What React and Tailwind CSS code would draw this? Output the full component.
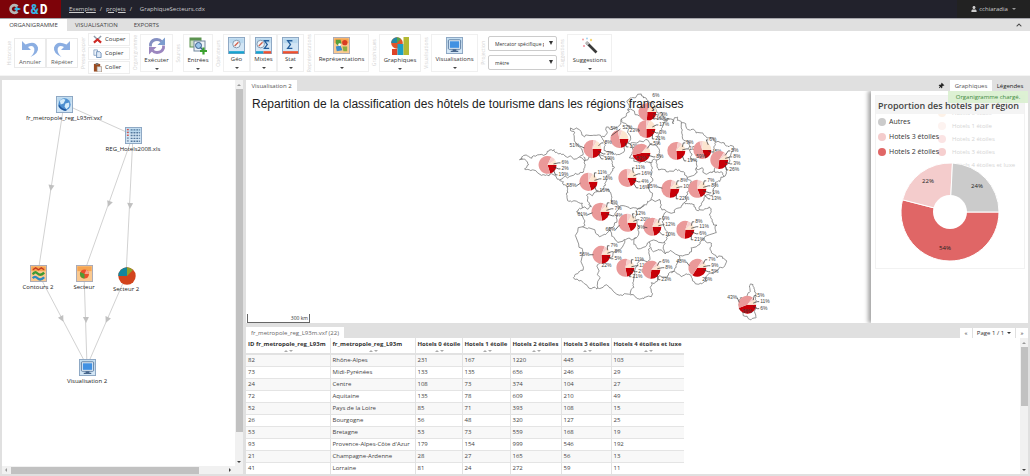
import React from "react";
import { FaUser, FaThumbtack, FaChevronUp } from "react-icons/fa";

const rows = [
  [82, "Rhône-Alpes", 231, 167, 1220, 445, 103],
  [73, "Midi-Pyrénées", 133, 135, 656, 246, 29],
  [24, "Centre", 108, 73, 374, 104, 27],
  [72, "Aquitaine", 135, 78, 609, 210, 49],
  [52, "Pays de la Loire", 85, 71, 393, 108, 15],
  [26, "Bourgogne", 56, 48, 320, 127, 25],
  [53, "Bretagne", 53, 73, 559, 168, 19],
  [93, "Provence-Alpes-Côte d'Azur", 179, 154, 999, 546, 192],
  [21, "Champagne-Ardenne", 28, 27, 165, 56, 13],
  [41, "Lorraine", 81, 24, 272, 59, 11],
];

const columns = [
  { name: "ID fr_metropole_reg_L93m", width: "w-[84px]" },
  { name: "fr_metropole_reg_L93m", width: "w-[85px]" },
  { name: "Hotels 0 étoile", width: "w-[47px]" },
  { name: "Hotels 1 étoile", width: "w-[48px]" },
  { name: "Hotels 2 étoiles", width: "w-[51px]" },
  { name: "Hotels 3 étoiles", width: "w-[50px]" },
  { name: "Hotels 4 étoiles et luxe", width: "w-[73px]" },
];

// region outlines, as lists of x,y pairs in map units
const outlines = [
  "642,94 644,98 650,103 657,111 663,113 670,119 674,124 678,117 682,123 690,130 702,133 708,138 717,142 725,143 733,146 732,153 727,165 724,177 718,182 716,187 707,195 702,205 700,210 710,207 712,209 713,220 717,233 705,238 712,245 715,255 726,260 723,268 714,274 707,282 702,284 693,279 682,277 670,273 660,276 652,283 652,297 642,299 632,295 625,294 610,288 597,289 585,284 574,278 580,272 583,250 583,227 582,215 577,212 583,208 572,202 567,195 564,185 560,180 547,175 533,170 525,169 529,165 520,160 528,156 538,155 550,150 558,153 567,157 580,157 578,145 571,128 580,130 585,137 602,137 607,127 622,119 630,112 628,103 631,98 642,94",
  "628,110 640,116 655,118 670,119",
  "622,119 628,125 630,135 628,143",
  "602,137 606,143 607,152 617,155 625,151 628,143",
  "580,157 592,158 604,156 612,160 615,168",
  "628,143 640,141 655,145 660,152 657,160 648,162 640,163 630,158 628,143",
  "657,145 662,130 670,119",
  "682,123 683,137 690,150 692,160 697,168",
  "657,160 658,168 668,172 680,170 688,178 697,168 708,174 718,172 724,177",
  "717,142 714,150 718,160 716,172",
  "584,157 585,168 580,174 568,178 560,180",
  "615,168 608,175 606,185 600,192 590,194 588,200 592,207 583,208",
  "606,190 612,200 620,207",
  "650,162 652,170 650,185 652,200 645,205 635,208 620,207",
  "688,178 692,185 688,195 685,203",
  "652,200 662,205 668,212 680,208 685,203 695,205 700,210",
  "620,207 617,218 610,228 600,237 583,227",
  "645,205 638,215 640,228 637,238",
  "610,228 615,238 625,240 637,238",
  "667,212 663,222 668,232 665,242 650,242 637,247 637,238",
  "665,242 666,254 680,256 690,254 700,245 705,238",
  "680,256 676,268 672,273",
  "650,242 654,252 666,254",
  "651,248 648,262 635,272 634,285 632,295",
  "625,240 620,250 610,258 600,264 598,275 597,289",
  "752,284 755,288 757,297 757,308 752,320 744,316 740,305 741,298 750,293 752,284",
];

// shares go clockwise from three o'clock: 2 stars, 3 stars, 1 star, 0 star
const pies = [
  { x: 648, y: 112, s: [26, 52, 6, 16], l: [["6%", 5, -16], ["9%", 13, 3], ["16%", 9, 7]] },
  { x: 647, y: 129, s: [25, 50, 6, 19], l: [["17%", 13, -4], ["23%", -17, 2], ["3%", 13, 4], ["21%", 9, 10]] },
  { x: 620, y: 139, s: [22, 50, 8, 20], l: [["5%", -9, -10], ["52%", 3, -11], ["10%", 10, 8]] },
  { x: 593, y: 149, s: [24, 53, 6, 17], l: [["51%", -23, -3], ["8%", 12, -6], ["3%", 14, 5], ["19%", 12, 10]] },
  { x: 642, y: 153, s: [46, 40, 4, 10], l: [["5%", 12, -9], ["8%", 15, 4], ["52%", -5, 6]] },
  { x: 677, y: 151, s: [24, 54, 8, 14], l: [["9%", 10, -8], ["10%", 13, -2], ["19%", 11, 10]] },
  { x: 703, y: 150, s: [20, 50, 6, 24], l: [["6%", 7, -10], ["59%", -6, 7], ["8%", 12, 2]] },
  { x: 720, y: 160, s: [27, 57, 6, 10], l: [["5%", 12, -9], ["8%", 14, -3], ["3%", 14, 4], ["26%", 10, 10]] },
  { x: 548, y: 165, s: [20, 62, 9, 9], l: [["6%", 14, -2], ["2%", 14, 4], ["19%", 11, 10]] },
  { x: 589, y: 182, s: [20, 55, 8, 17], l: [["11%", 9, -9], ["10%", 14, -3], ["58%", -22, 4], ["16%", 11, 9]] },
  { x: 628, y: 178, s: [19, 55, 9, 17], l: [["11%", 8, -10], ["16%", 14, -4], ["4%", 14, 4], ["16%", 12, 10]] },
  { x: 671, y: 189, s: [26, 52, 8, 14], l: [["8%", 10, -8], ["10%", 13, -2], ["55%", -23, -2], ["22%", 9, 10]] },
  { x: 698, y: 189, s: [19, 57, 8, 16], l: [["7%", 10, -8], ["8%", 14, -3], ["1%", 15, 4], ["13%", 14, 10]] },
  { x: 601, y: 212, s: [22, 58, 7, 13], l: [["8%", 10, -9], ["7%", 14, -3], ["61%", -23, 3], ["4%", 15, 4]] },
  { x: 628, y: 223, s: [19, 56, 8, 17], l: [["12%", 8, -9], ["20%", 13, -3], ["60%", -22, 7]] },
  { x: 653, y: 227, s: [22, 58, 6, 14], l: [["9%", 10, -8], ["12%", 13, -2], ["8%", -15, 1], ["10%", 13, 8]] },
  { x: 686, y: 230, s: [26, 54, 8, 12], l: [["8%", 10, -8], ["11%", 14, -3], ["6%", 14, 4], ["21%", 9, 10]] },
  { x: 602, y: 255, s: [24, 57, 7, 12], l: [["7%", 9, -9], ["8%", 13, -3], ["56%", -22, 0], ["5%", 13, 4], ["22%", 0, 11]] },
  { x: 626, y: 268, s: [22, 56, 10, 12], l: [["11%", 9, -8], ["11%", 14, -2], ["2%", 13, 4], ["21%", 7, 9]] },
  { x: 652, y: 270, s: [27, 58, 6, 9], l: [["6%", 11, -8], ["8%", 14, -2], ["23%", 10, 10]] },
  { x: 698, y: 268, s: [34, 50, 6, 10], l: [["7%", 11, -8], ["9%", 14, -2], ["48%", -21, -6], ["5%", 14, 4], ["26%", 5, 12]] },
  { x: 748, y: 305, s: [44, 42, 4, 10], l: [["5%", 10, -9], ["11%", 13, -3], ["43%", -20, -7], ["6%", 13, 4], ["36%", -5, 7]] },
];

const pieColors = ["#c80008", "#ea9999", "#f6cfcd", "#fce5cf"];

// midpoint displacement, gives the borders their ragged line
const rough = (line, seed) => {
  let state = seed * 7919 + 13;
  const next = () => {
    state = (state * 16807) % 2147483647;
    return state / 2147483647 - 0.5;
  };
  let pts = line.split(" ").map((p) => p.split(",").map(Number));
  for (let pass = 0; pass < 3; pass++) {
    const out = [pts[0]];
    for (let i = 1; i < pts.length; i++) {
      const [ax, ay] = pts[i - 1];
      const [bx, by] = pts[i];
      const d = Math.hypot(bx - ax, by - ay) * 0.6;
      out.push([(ax + bx) / 2 + next() * d, (ay + by) / 2 + next() * d], [bx, by]);
    }
    pts = out;
  }
  return pts.map((p) => p.map((n) => n.toFixed(1)).join(",")).join(" ");
};

const slice = (cx, cy, r, from, to) => {
  const a = from * 2 * Math.PI;
  const b = to * 2 * Math.PI;
  return `M${cx},${cy} L${cx + r * Math.cos(a)},${cy + r * Math.sin(a)} A${r},${r} 0 ${to - from > 0.5 ? 1 : 0} 1 ${cx + r * Math.cos(b)},${cy + r * Math.sin(b)} Z`;
};

/* ---------- icons ---------- */

const Tile = ({ warm, children, ...props }) => (
  <svg viewBox="0 0 18 18" width="17" height="17" {...props}>
    <rect x="0.5" y="0.5" width="17" height="17" fill={warm ? "#fbc98f" : "#d3e6f5"} stroke={warm ? "#a9a9b5" : "#8aa5c2"} />
    <rect x="1.5" y="1.5" width="15" height="5" fill={warm ? "#f6a552" : "#b9d8ee"} />
    {children}
  </svg>
);

const GlobeIcon = (props) => (
  <Tile {...props}>
    <circle cx="9" cy="9" r="6.5" fill="#4d8fd0" />
    <path d="M4 5 Q7 2 10 4 L8 8 L5 9 Z M10 8 L14 7 L14 11 L11 14 L9 11 Z" fill="#d5ecfa" />
    <path d="M3 10 Q6 15 11 15" stroke="#1f5499" strokeWidth="1.5" fill="none" />
  </Tile>
);

const SheetIcon = (props) => (
  <Tile {...props}>
    {[3, 6, 9, 12, 15].map((y, i) => (
      <g key={y}>
        <rect x="2" y={y - 1} width="2" height="1.5" fill={i < 3 ? "#d4574e" : "#7f93ac"} />
        <path d={`M6 ${y} H16`} stroke="#56789c" strokeWidth="1.5" strokeDasharray="2 1" />
      </g>
    ))}
  </Tile>
);

const ContourIcon = (props) => (
  <Tile warm {...props}>
    <path d="M3 5 L6 3 L9 5 L12 3 L15 5" stroke="#c63a1e" strokeWidth="1.5" fill="none" />
    <path d="M3 10 Q5 6 8 9 T15 8" stroke="#3f9a33" strokeWidth="2.5" fill="none" />
    <path d="M3 14 Q5 11 8 14 T15 13" stroke="#2c8ac4" strokeWidth="2.5" fill="none" />
  </Tile>
);

const SectorIcon = (props) => (
  <Tile warm {...props}>
    <circle cx="9" cy="9.5" r="4.8" fill="#e9502d" />
    <path d="M9 9.5 L4.5 7.5 A4.8 4.8 0 0 0 9 14.3 Z" fill="#4f9c36" />
    <path d="M9 9.5 L11 5 A4.8 4.8 0 0 1 13.8 9.5 Z" fill="#f7a28c" />
  </Tile>
);

const ScreenIcon = (props) => (
  <Tile {...props}>
    <rect x="2.5" y="3" width="13" height="10" rx="1" fill="#edf5fb" stroke="#56779d" />
    <rect x="4" y="4.5" width="10" height="7" fill="#4191e2" />
    <path d="M7 13 H11 V14.5 H13 V16 H5 V14.5 H7 Z" fill="#48678c" />
  </Tile>
);

const PieIcon = (props) => (
  <svg viewBox="0 0 18 18" width="18" height="18" {...props}>
    <circle cx="9" cy="9" r="8.7" fill="#d2431c" />
    <path d="M9 9 L0.3 9 A8.7 8.7 0 0 1 9 0.3 Z" fill="#12869e" />
    <path d="M9 9 L9 0.3 A8.7 8.7 0 0 1 15 3 Z" fill="#8fa02c" />
  </svg>
);

const UndoIcon = ({ flip }) => (
  <svg viewBox="0 0 18 18" className={flip ? "size-[18px] -scale-x-100" : "size-[18px]"}>
    <path d="M1 1 V10 H10 L7 7 Q12 4.500 13.300 8.500 Q14 13 9.500 17 Q18 13 17 7.500 Q14.500 0 4.500 4.500 Z" fill="#6f9bdc" />
  </svg>
);

const CutIcon = () => (
  <svg viewBox="0 0 10 10" className="size-[9px]">
    <path d="M1 1 L7 7 M9 1 L3 7" stroke="#8d9aa8" strokeWidth="1.600" />
    <path d="M1 8.500 L5 5 L9 8.500" stroke="#cf2a25" strokeWidth="2.400" fill="none" />
  </svg>
);

const CopyIcon = () => (
  <svg viewBox="0 0 10 10" className="size-[9px]">
    <path d="M1 1 H5 V7 H1 Z" fill="#eef3fa" stroke="#8ca5c5" />
    <path d="M4 3 H7.500 L9 4.500 V9.500 H4 Z" fill="#dfeaf7" stroke="#6e8fb8" />
  </svg>
);

const PasteIcon = () => (
  <svg viewBox="0 0 10 10" className="size-[9px]">
    <path d="M1 1 H8 V9.500 H1 Z" fill="#9a4a1f" />
    <path d="M3 0 H6 V2 H3 Z" fill="#7a7a7a" />
    <path d="M4.500 4 H9.500 V10 H4.500 Z" fill="#e6e9ee" stroke="#a3826a" strokeWidth="0.700" />
  </svg>
);

const RefreshIcon = () => (
  <svg viewBox="0 0 18 18" className="size-[18px]">
    <path d="M2.500 9.500 V7 Q4 2.500 9 2.500 Q12 2.500 13.500 4.500" stroke="#8590c2" strokeWidth="2.800" fill="none" />
    <path d="M17 0.500 V8 H9.500 Z" fill="#7c9cce" />
    <path d="M15.500 8.500 V11 Q14 15.500 9 15.500 Q6 15.500 4.500 13.500" stroke="#9b86bf" strokeWidth="2.800" fill="none" />
    <path d="M1 17.500 V10 H8.500 Z" fill="#9b86bf" />
  </svg>
);

const SourcesIcon = () => (
  <svg viewBox="0 0 18 18" className="size-[18px]">
    <rect x="1" y="1" width="11" height="9" fill="#cfe2c4" stroke="#5c9350" />
    <rect x="1" y="1" width="11" height="2.500" fill="#5c9350" />
    <rect x="5" y="4" width="11" height="10" fill="#eef3f8" stroke="#72879d" />
    <circle cx="9.500" cy="8.500" r="3" fill="#9ac4ea" stroke="#375d88" />
    <path d="M11.500 10.500 L14 13" stroke="#375d88" strokeWidth="1.500" />
    <path d="M14.500 10.500 V17.500 M11 14 H18" stroke="#3ba12f" strokeWidth="2.200" />
  </svg>
);

const Compass = ({ cx = 9 }) => (
  <g>
    <circle cx={cx} cy="7.500" r="4" fill="#eef4f9" stroke="#7d95ad" />
    <path d={`M${cx - 2} 9.500 L${cx + 2} 5.500`} stroke="#d25f4a" strokeWidth="1.300" />
  </g>
);

const GeoIcon = () => (
  <Tile>
    <Compass />
    <rect x="1" y="15" width="16" height="2.500" fill="#16a3cf" />
  </Tile>
);

const Sigma = ({ x }) => (
  <path d={`M${x + 5} 4 H${x} L${x + 3} 8 L${x} 12 H${x + 5}`} fill="none" stroke="#245e9c" strokeWidth="1.400" />
);

const MixIcon = () => (
  <Tile>
    <Compass cx={6} />
    <Sigma x={10} />
    <rect x="1" y="15" width="8" height="2.500" fill="#16a3cf" />
    <rect x="9" y="15" width="8" height="2.500" fill="#f0502d" />
  </Tile>
);

const StatIcon = () => (
  <Tile>
    <Sigma x={6} />
    <rect x="1" y="15" width="16" height="2.500" fill="#f0502d" />
  </Tile>
);

const RepresentationIcon = () => (
  <Tile warm>
    <path d="M3 3 H8 L9 7 L5 9 L3 7 Z" fill="#56a03b" />
    <path d="M3 10 L8 9 L10 14 L4 15 Z" fill="#3d8cc9" />
    <circle cx="12.500" cy="6" r="2.800" fill="#d83c22" />
    <path d="M10 10 H15 V15 H11 Z" fill="#8cae3f" />
    <circle cx="7" cy="8" r="1.400" fill="#fff" />
  </Tile>
);

const ChartsIcon = () => (
  <svg viewBox="0 0 18 18" className="size-[18px]">
    <circle cx="6" cy="6" r="5.800" fill="#e0552b" />
    <path d="M6 6 L0.200 6 A5.800 5.800 0 0 1 6 0.200 Z" fill="#2389a5" />
    <path d="M6 6 L6 0.200 A5.800 5.800 0 0 1 10 2 Z" fill="#57a548" />
    <rect x="1" y="12" width="5.500" height="6" fill="#dd4326" />
    <rect x="6.500" y="7" width="6" height="11" fill="#1d9fc6" />
    <rect x="12.500" y="0" width="5.500" height="18" fill="#b3b932" />
  </svg>
);

const WandIcon = () => (
  <svg viewBox="0 0 18 18" className="size-[18px]">
    <path d="M5.500 5.500 L15.500 15.500" stroke="#3a3a3a" strokeWidth="2.600" />
    <path d="M5 5 L7.500 7.500" stroke="#b9b9b9" strokeWidth="2.600" />
    <g>
      <circle cx="2" cy="2.500" r="1" fill="#f2a0a0" />
      <circle cx="6" cy="1.500" r="1" fill="#a6d3ef" />
      <circle cx="10" cy="3" r="1.200" fill="#f4d77a" />
      <circle cx="3" cy="9" r="1" fill="#f08b9a" />
    </g>
  </svg>
);

/* ---------- toolbar ---------- */

const GroupLabel = ({ children }) => (
  <span className="flex w-[10px] shrink-0 items-center justify-center">
    <span className="rotate-180 whitespace-nowrap text-[5px] leading-[8px] text-[#d4d4d4] [writing-mode:vertical-rl]">
      {children}
    </span>
  </span>
);

const ToolButton = ({ icon, label, width }) => (
  <button className={`flex h-[38px] flex-col items-center border border-[#f0f0f0] pt-0.5 ${width}`}>
    {icon}
    <span className="mt-px text-[6px] leading-[8px]">{label}</span>
    <span className="mt-1 border-x-2 border-t-2 border-x-transparent border-t-[#444]" />
  </button>
);

const clipboard = [
  { icon: <CutIcon />, label: "Couper" },
  { icon: <CopyIcon />, label: "Copier" },
  { icon: <PasteIcon />, label: "Coller" },
];

const Dropdown = ({ label, value }) => (
  <div className="relative flex h-[15px] w-[69px]">
    <select aria-label={label} className="block h-full w-full appearance-none overflow-hidden rounded-xs border border-[#ccc] bg-white pl-1.5 pr-3 text-[5px] leading-[12px] text-clip">
      <option>{value}</option>
    </select>
    <span className="pointer-events-none absolute right-1 top-[5px] border-x-2 border-t-4 border-x-transparent border-t-[#333]" />
  </div>
);

const Toolbar = () => (
  <div className="flex h-[45px] items-center border-b border-[#f4f4f4] bg-white pl-1 text-[#333]">
    <GroupLabel>Historique</GroupLabel>
    <div className="flex">
      <button className="flex h-[30px] w-8 flex-col items-center border border-[#e6e6e6] pt-px opacity-80">
        <UndoIcon />
        <span className="text-[6px] leading-[8px]">Annuler</span>
      </button>
      <button className="flex h-[30px] w-8 flex-col items-center border border-[#e6e6e6] pt-px opacity-80">
        <UndoIcon flip />
        <span className="text-[6px] leading-[8px]">Répéter</span>
      </button>
    </div>
    <GroupLabel>Presse-papier</GroupLabel>
    <div className="flex flex-col gap-px">
      {clipboard.map((item) => (
        <button key={item.label} className="flex h-[13px] w-[42px] items-center gap-[3px] border border-[#eee] pl-1 text-[6px] leading-[8px]">
          {item.icon}
          {item.label}
        </button>
      ))}
    </div>
    <GroupLabel>Organigramme</GroupLabel>
    <ToolButton icon={<RefreshIcon />} label="Exécuter" width="w-[33px]" />
    <GroupLabel>Sources</GroupLabel>
    <ToolButton icon={<SourcesIcon />} label="Entrées" width="w-[30px]" />
    <GroupLabel>Opérateurs</GroupLabel>
    <ToolButton icon={<GeoIcon />} label="Géo" width="w-[27px]" />
    <ToolButton icon={<MixIcon />} label="Mixtes" width="w-[27px]" />
    <ToolButton icon={<StatIcon />} label="Stat" width="w-[27px]" />
    <GroupLabel>Représentations</GroupLabel>
    <ToolButton icon={<RepresentationIcon />} label="Représentations" width="w-[55px]" />
    <GroupLabel>Graphiques</GroupLabel>
    <ToolButton icon={<ChartsIcon />} label="Graphiques" width="w-[42px]" />
    <GroupLabel>Visualisations</GroupLabel>
    <ToolButton icon={<ScreenIcon />} label="Visualisations" width="w-[47px]" />
    <GroupLabel>Projection</GroupLabel>
    <div className="flex flex-col gap-1">
      <Dropdown label="Projection" value="Mercator spécifique p" />
      <Dropdown label="Unité" value="mètre" />
    </div>
    <GroupLabel>Suggestions</GroupLabel>
    <ToolButton icon={<WandIcon />} label="Suggestions" width="w-[45px]" />
  </div>
);

/* ---------- left panel ---------- */

const links = [
  [64, 104, 38, 273, 51, 188],
  [64, 104, 133, 135],
  [133, 135, 84, 273, 109, 204],
  [133, 135, 126, 276, 130, 206],
  [38, 273, 87, 366, 62, 319],
  [84, 273, 87, 366, 86, 320],
  [126, 276, 87, 366, 107, 320],
];

const nodes = [
  { x: 64, y: 104, Icon: GlobeIcon, label: "fr_metropole_reg_L93m.vxf" },
  { x: 133, y: 135, Icon: SheetIcon, label: "REG_Hotels2008.xls" },
  { x: 38, y: 273, Icon: ContourIcon, label: "Contours 2" },
  { x: 84, y: 273, Icon: SectorIcon, label: "Secteur" },
  { x: 126, y: 275, Icon: PieIcon, label: "Secteur 2" },
  { x: 87, y: 367, Icon: ScreenIcon, label: "Visualisation 2" },
];

const VerticalBar = ({ thumb }) => (
  <div aria-hidden="true" className="flex w-2 shrink-0 flex-col items-center bg-[#f1f1f1]">
    <span className="flex h-[9px] items-center">
      <span className="border-x-2 border-b-2 border-x-transparent border-b-[#999]" />
    </span>
    <span className={`w-[7px] bg-[#c1c1c1] ${thumb}`} />
    <span className="mt-auto flex h-[9px] items-center">
      <span className="border-x-2 border-t-2 border-x-transparent border-t-[#444]" />
    </span>
  </div>
);

const FlowPanel = () => (
  <section className="flex w-[241px] shrink-0 flex-col bg-white">
    <div className="flex min-h-0 flex-1">
      <svg viewBox="2 80 232 386" preserveAspectRatio="xMinYMin meet" className="min-w-0 flex-1">
        {links.map(([x1, y1, x2, y2, ax, ay], i) => (
          <g key={i}>
            <line x1={x1} y1={y1} x2={x2} y2={y2} stroke="#d2d2d2" />
            {ax && (
              <path
                d="M-3,-3 H3 L0,3 Z"
                fill="#c0c0c0"
                transform={`translate(${ax} ${ay}) rotate(${(Math.atan2(y2 - y1, x2 - x1) * 180) / Math.PI - 90})`}
              />
            )}
          </g>
        ))}
        {nodes.map(({ x, y, Icon, label }) => (
          <g key={label}>
            <Icon x={x - 8} y={y - 8} />
            <text x={x} y={y + 16} textAnchor="middle" fontSize="6" fill="#222">
              {label}
            </text>
          </g>
        ))}
      </svg>
      <VerticalBar thumb="h-[343px]" />
    </div>
    <div aria-hidden="true" className="flex h-2 items-center bg-[#f1f1f1] pl-[3px] pr-3">
      <span className="border-y-2 border-r-2 border-y-transparent border-r-[#999]" />
      <span className="ml-1 h-[7px] w-[188px] bg-[#c1c1c1]" />
      <span className="ml-auto border-y-2 border-l-2 border-y-transparent border-l-[#444]" />
    </div>
  </section>
);

/* ---------- map ---------- */

const MapView = () => (
  <div className="relative min-w-0 flex-1 bg-white">
    <svg viewBox="246 91 626 232" preserveAspectRatio="xMinYMin meet" className="h-full w-full">
      {outlines.map((line, i) => (
        <polyline key={i} points={rough(line, i + 1)} fill="none" stroke="#666" strokeWidth="0.700" />
      ))}
      {pies.map((pie) => {
        let start = 0;
        return (
          <g key={`${pie.x}-${pie.y}`}>
            {pie.s.map((share, i) => {
              const from = start;
              start += share / 100;
              return <path key={i} d={slice(pie.x, pie.y, 9, from, start)} fill={pieColors[i]} />;
            })}
            {pie.l.map(([text, dx, dy]) => (
              <g key={`${text}${dy}`}>
                {Math.abs(dx) > 6 && (
                  <path
                    d={dx > 0 ? `M${pie.x + 6},${pie.y + dy / 2} L${pie.x + dx - 3},${pie.y + dy} h2` : `M${pie.x - 8},${pie.y + dy / 3} L${pie.x + dx + 10},${pie.y + dy}`}
                    fill="none"
                    stroke="#333"
                    strokeWidth="0.700"
                  />
                )}
                <text x={pie.x + dx} y={pie.y + dy + 1} fontSize="5" fill="#444" fontFamily="Liberation Sans, sans-serif">
                  {text}
                </text>
              </g>
            ))}
          </g>
        );
      })}
    </svg>
    <h2 className="absolute left-1.5 top-1.5 whitespace-nowrap font-['Liberation_Sans',sans-serif] text-[12px] leading-[14px] text-[#222]">
      Répartition de la classification des hôtels de tourisme dans les régions françaises
    </h2>
    <span className="absolute bottom-0 left-px h-[9px] w-[63px] border-x border-b border-[#666] pr-px text-right text-[5px] leading-[9px]">
      300 km
    </span>
  </div>
);

/* ---------- charts panel ---------- */

const legend = [
  { label: "Autres", color: "bg-[#cbcbcb]" },
  { label: "Hotels 3 étoiles", color: "bg-[#f4cccc]" },
  { label: "Hotels 2 étoiles", color: "bg-[#e06666]" },
];

const fading = [
  { label: "Hotels 0 étoile", color: "bg-[#fdf2e8]" },
  { label: "Hotels 1 étoile", color: "bg-[#fdf3f0]" },
  { label: "Hotels 2 étoiles", color: "bg-[#fbe4e4]" },
  { label: "Hotels 3 étoiles", color: "bg-[#f6cfcf]" },
  { label: "Hotels 4 étoiles et luxe", color: "bg-white" },
];

const donut = [
  { from: 0, to: 0.54, color: "#e06666", text: "54%", x: 45, y: 89 },
  { from: 0.54, to: 0.758, color: "#f4cccc", text: "22%", x: 28, y: 22 },
  { from: 0.758, to: 1, color: "#cbcbcb", text: "24%", x: 77, y: 27 },
];

const ChartsPanel = () => (
  <aside className="relative w-[157px] shrink-0 bg-white pl-1 pr-[3px] pt-1 shadow-[-3px_0_4px_rgba(0,0,0,0.35)]">
    <div className="relative border border-[#f2f2f2] pb-1.5">
      <h3 className="relative z-10 h-[18px] whitespace-nowrap bg-[#f4f4f4] pl-0.5 text-[9px] font-semibold leading-[20px] text-[#444]">
        Proportion des hotels par région
      </h3>
      <ul className="absolute left-[62px] top-[13px] flex flex-col gap-[5px] text-[6px] leading-[8px] text-[#d4d4d4]">
        {fading.map((item) => (
          <li key={item.label} className="flex items-center gap-1.5 whitespace-nowrap">
            <span className={`size-2 rounded-full ${item.color}`} />
            {item.label}
          </li>
        ))}
      </ul>
      <ul className="relative flex flex-col gap-[5px] px-0.5 pt-[3px] text-[7px] leading-[10px] text-[#333]">
        {legend.map((item) => (
          <li key={item.label} className="flex items-center gap-[3px]">
            <span className={`size-2 rounded-full ${item.color}`} />
            {item.label}
          </li>
        ))}
      </ul>
      <svg viewBox="0 0 100 100" className="relative mx-auto mt-[5px] size-[100px]">
        {donut.map((d) => (
          <g key={d.text}>
            <path d={slice(50, 50, 49, d.from, d.to)} fill={d.color} stroke="#fff" />
            <text x={d.x} y={d.y - 1} textAnchor="middle" fontSize="6" fill="#222">
              {d.text}
            </text>
          </g>
        ))}
        <circle cx="50" cy="50" r="17" fill="#fff" />
      </svg>
    </div>
    <div role="status" className="absolute right-0 top-0 z-20 h-3 w-20 bg-[#d9efcf]/90 text-center text-[6px] leading-[12px] text-[#3c8a3d]">
      Organigramme chargé.
    </div>
  </aside>
);

/* ---------- data table ---------- */

const DataPanel = () => (
  <section className="flex h-[151px] flex-col">
    <div className="flex h-[15px] shrink-0 items-end justify-between">
      <h2 className="h-[11px] bg-white px-[5px] text-[6px] leading-[12px] text-[#666]">fr_metropole_reg_L93m.vxf (22)</h2>
      <nav className="flex gap-px text-[6px] leading-[10px] text-[#333]">
        <button className="h-[10px] w-3 bg-white">«</button>
        <button className="flex h-[10px] w-[42px] items-center justify-center gap-[3px] bg-white">
          Page 1 / 1
          <span className="border-x-2 border-t-2 border-x-transparent border-t-[#333]" />
        </button>
        <button className="h-[10px] w-3 bg-white">»</button>
      </nav>
    </div>
    <div className="flex min-h-0 flex-1 bg-white">
      <div className="min-w-0 flex-1 overflow-hidden">
        <table className="w-[438px] table-fixed border-collapse text-[6px] leading-[8px] text-[#444]">
          <thead>
            <tr className="h-4 border-b-2 border-[#e2e2e2]">
              {columns.map((col) => (
                <th key={col.name} className={`${col.width} whitespace-nowrap border-r border-[#e2e2e2] p-0 pl-0.5 text-left align-top font-bold text-[#333] last:border-r-0`}>
                  <span className="block leading-[12px]">{col.name}</span>
                  <span className="flex justify-center gap-px">
                    <span className="border-x-2 border-b-2 border-x-transparent border-b-[#aaa]" />
                    <span className="border-x-2 border-t-2 border-x-transparent border-t-[#aaa]" />
                  </span>
                </th>
              ))}
            </tr>
          </thead>
          <tbody>
            {rows.map((row) => (
              <tr key={row[0]} className="h-3 border-b border-[#e4e4e4] odd:bg-[#f8f8f8]">
                {row.map((cell, i) => (
                  <td key={i} className="whitespace-nowrap border-r border-[#e2e2e2] p-0 pl-0.5 last:border-r-0">
                    {cell}
                  </td>
                ))}
              </tr>
            ))}
          </tbody>
        </table>
      </div>
      <VerticalBar thumb="h-[59px]" />
    </div>
  </section>
);

const TopBar = () => (
  <header className="flex h-[19px] border-b border-[#a5a5ab] bg-[#22222c] text-[6px] text-[#ccc]">
    <div className="flex w-[61px] items-center bg-[#7d0309] pl-2">
      <svg viewBox="0 0 14 12" className="h-3 w-[14px]">
        <path d="M10.500 2.500 A5.300 5.300 0 1 0 10.500 9.500 L8 7.500 A2.300 2.300 0 1 1 8 4.500 Z" fill="#b6b6b6" />
        <path d="M6 6 L9.500 3 V5 H11 L13 6 L11 7 H9.500 V9 Z" fill="#3cb9e6" />
      </svg>
      <span className="flex gap-px pl-px font-['Liberation_Sans_Narrow','Open_Sans_Condensed','Liberation_Sans',sans-serif] text-[14px] font-bold leading-[18px] text-white">
        <span>C</span>
        <span className="text-[#35b3e4]">&amp;</span>
        <span>D</span>
      </span>
    </div>
    <nav className="flex flex-1 items-center gap-1 pl-2">
      <a href="#exemples" className="underline">Exemples</a>
      <span>/</span>
      <a href="#projets" className="underline">projets</a>
      <span>/</span>
      <span className="pl-1">GraphiqueSecteurs.cdx</span>
    </nav>
    <button className="flex w-[73px] items-center justify-center gap-0.5 bg-[#222]">
      <FaUser className="size-[6px]" />
      cchiaradia
      <span className="ml-0.5 border-x-2 border-t-2 border-x-transparent border-t-[#999]" />
    </button>
  </header>
);

const App = () => {
  return (
    <div className="flex h-screen flex-col overflow-hidden bg-[#e0e0e0] font-['Open_Sans','Noto_Sans',sans-serif] text-[#333]">
      <TopBar />
      <div className="flex h-3 shrink-0 items-center text-[6px] leading-[12px] text-[#444]">
        <button className="h-3 w-[67px] bg-white">ORGANIGRAMME</button>
        <button className="ml-2">VISUALISATION</button>
        <button className="ml-4">EXPORTS</button>
        <button aria-label="Replier" className="ml-auto mr-2">
          <FaChevronUp className="size-[6px]" />
        </button>
      </div>
      <Toolbar />
      <main className="flex min-h-0 flex-1 gap-[3px] pb-0.5 pl-0.5 pr-0.5 pt-1">
        <FlowPanel />
        <div className="flex min-w-0 flex-1 flex-col">
          <div className="flex h-[11px] shrink-0 items-center text-[6px] leading-[10px]">
            <button className="h-full w-[51px] bg-white text-[#555]">Visualisation 2</button>
            <FaThumbtack className="ml-auto mr-1.5 size-[6px] rotate-45 text-[#222]" />
            <button className="h-full w-[42px] bg-white text-[#555]">Graphiques</button>
            <button className="w-9 text-[#222]">Légendes</button>
          </div>
          <div className="flex min-h-0 flex-1 overflow-hidden">
            <MapView />
            <ChartsPanel />
          </div>
          <DataPanel />
        </div>
      </main>
    </div>
  );
};

export default App;
